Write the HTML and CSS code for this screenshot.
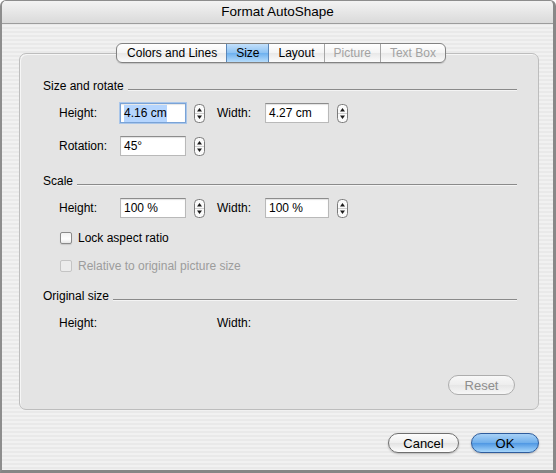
FILE: index.html
```html
<!DOCTYPE html>
<html lang="en">
  <head>
    <meta charset="UTF-8" />
    <title>Format AutoShape</title>
    <link rel="stylesheet" href="styles.css">
  </head>
  <body>
    <div class="window">
      <div class="titlebar">Format AutoShape</div>
      <div class="content">
        <div class="panel">
          <div class="tabs">
            <span class="tab">Colors and Lines</span>
            <span class="tab selected">Size</span>
            <span class="tab">Layout</span>
            <span class="tab disabled">Picture</span>
            <span class="tab disabled">Text Box</span>
          </div>

          <div class="group-title first"><span>Size and rotate</span><i></i></div>
          <div class="field-row">
            <label class="lbl">Height:</label>
            <span class="input focused"><span class="sel">4.16 cm</span></span>
            <svg class="spin" width="11" height="19" viewBox="0 0 11 19"><use href="#spin" /></svg>
            <label class="lbl second">Width:</label>
            <span class="input narrow">4.27 cm</span>
            <svg class="spin" width="11" height="19" viewBox="0 0 11 19"><use href="#spin" /></svg>
          </div>
          <div class="field-row gap-lg">
            <label class="lbl">Rotation:</label>
            <span class="input">45°</span>
            <svg class="spin" width="11" height="19" viewBox="0 0 11 19"><use href="#spin" /></svg>
          </div>

          <div class="group-title"><span>Scale</span><i></i></div>
          <div class="field-row">
            <label class="lbl">Height:</label>
            <span class="input">100 %</span>
            <svg class="spin" width="11" height="19" viewBox="0 0 11 19"><use href="#spin" /></svg>
            <label class="lbl second">Width:</label>
            <span class="input narrow">100 %</span>
            <svg class="spin" width="11" height="19" viewBox="0 0 11 19"><use href="#spin" /></svg>
          </div>
          <div class="check-row">
            <span class="checkbox"></span>
            <span>Lock aspect ratio</span>
          </div>
          <div class="check-row disabled tight">
            <span class="checkbox"></span>
            <span>Relative to original picture size</span>
          </div>

          <div class="group-title orig"><span>Original size</span><i></i></div>
          <div class="field-row">
            <label class="lbl wide">Height:</label>
            <label class="lbl">Width:</label>
          </div>

          <div class="panel-foot">
            <span class="btn off">Reset</span>
          </div>
        </div>

        <div class="dialog-buttons">
          <span class="btn cancel">Cancel</span>
          <span class="btn default">OK</span>
        </div>
      </div>
    </div>

    <svg width="0" height="0" style="position:absolute">
      <defs>
        <g id="spin">
          <rect x="0.5" y="0.5" width="10" height="18" rx="4" fill="#fafafa" stroke="#7b7b7b" />
          <line x1="1" y1="9.5" x2="10" y2="9.5" stroke="#d0d0d0" />
          <path d="M3 7.5 L5.5 4 L8 7.5 Z" fill="#1a1a1a" />
          <path d="M3 11.5 L5.5 15 L8 11.5 Z" fill="#1a1a1a" />
        </g>
      </defs>
    </svg>
  </body>
</html>
```

FILE: styles.css
```css
body {
  margin: 0;
  font-family: "Liberation Sans", Arial, sans-serif;
  font-size: 12px;
  color: #000;
  background: #fff;
}
.window {
  width: 556px;
  height: 473px;
  box-sizing: border-box;
  border: 1px solid #8d8d8d;
  border-left-width: 2px;
  border-right: 3px solid #888;
  border-bottom: 3px solid #858585;
  border-radius: 6px 6px 0 0;
  overflow: hidden;
  background: repeating-linear-gradient(#f1f1f1 0 2px, #e9e9e9 2px 4px);
}
.titlebar {
  height: 22px;
  line-height: 22px;
  text-align: center;
  font-size: 13.5px;
  background: linear-gradient(#f3f3f3, #dadada);
  border-bottom: 1px solid #9c9c9c;
}
.content {
  display: flex;
  flex-direction: column;
  padding-left: 17px;
}
.panel {
  margin-top: 29px;
  width: 520px;
  height: 357px;
  box-sizing: border-box;
  border: 1px solid #bdbdbd;
  border-radius: 7px;
  background: #e4e4e4;
  box-shadow: inset 1px 1px 0 #f6f6f6;
  display: flex;
  flex-direction: column;
  padding: 0 21px 14px 23px;
}
.tabs {
  display: flex;
  align-self: center;
  height: 20px;
  box-sizing: border-box;
  margin-top: -11px;
  margin-left: 2px;
  border: 1px solid #828282;
  border-radius: 6px;
  overflow: hidden;
  background: linear-gradient(#ffffff, #f4f4f4 50%, #e8e8e8 51%, #fbfbfb);
  box-shadow: 0 1px 1px rgba(0, 0, 0, 0.15);
}
.tab {
  padding: 0 9px;
  line-height: 18px;
  border-left: 1px solid #a6a6a6;
}
.tab:first-child {
  border-left: none;
  padding: 0 9px 0 10px;
}
.tab.selected {
  background: linear-gradient(#c3e0fb, #8cc2f3 50%, #6cb0ef 51%, #b6dcfb);
  border-left-color: #5a86b8;
  border-right: 1px solid #5a86b8;
  padding: 0 9px;
}
.tab.selected + .tab {
  border-left: none;
}
.tab.disabled {
  color: #a2a2a2;
}
.group-title {
  display: flex;
  align-items: center;
  height: 15px;
  line-height: 15px;
  margin-top: 18px;
}
.group-title.first {
  margin-top: 16px;
}
.group-title.orig {
  margin-top: 13px;
}
.group-title i {
  flex: 1;
  height: 1px;
  margin: 5px 0 0 4px;
  background: #8a8a8a;
  box-shadow: 0 1px 0 #f4f4f4;
}
.field-row {
  display: flex;
  align-items: center;
  height: 20px;
  margin-top: 9px;
  padding-left: 16px;
}
.field-row.gap-lg {
  margin-top: 13px;
}
.lbl {
  width: 61px;
}
.lbl.second {
  width: 48px;
  margin-left: 12px;
}
.lbl.wide {
  width: 158px;
}
.input {
  width: 66px;
  height: 20px;
  box-sizing: border-box;
  padding: 0 3px;
  line-height: 18px;
  background: #fff;
  border: 1px solid #b9b9b9;
  border-top-color: #8c8c8c;
  box-shadow: inset 0 1px 1px rgba(0, 0, 0, 0.12);
}
.input.narrow {
  width: 64px;
}
.input.focused {
  border-color: #7aa3d6;
  box-shadow: 0 0 0 1px #a9c6ea, inset 0 1px 1px rgba(0, 0, 0, 0.1);
}
.sel {
  background: #b5d5fe;
  padding: 1px 0 2px;
}
.spin {
  display: block;
  margin-left: 8px;
}
.check-row {
  display: flex;
  align-items: center;
  gap: 6px;
  height: 20px;
  margin-top: 10px;
  padding-left: 17px;
}
.check-row.tight {
  margin-top: 8px;
}
.checkbox {
  width: 12px;
  height: 12px;
  box-sizing: border-box;
  border: 1px solid #8a8a8a;
  border-radius: 2px;
  background: linear-gradient(#f2f2f2, #ffffff 60%, #e6e6e6);
  box-shadow: 0 1px 1px rgba(0, 0, 0, 0.12);
}
.check-row.disabled {
  color: #9c9c9c;
}
.check-row.disabled .checkbox {
  border-color: #c4c4c4;
  background: #ececec;
  box-shadow: none;
}
.panel-foot {
  margin-top: auto;
  display: flex;
  justify-content: flex-end;
  padding-right: 2px;
}
.btn {
  display: inline-flex;
  align-items: center;
  justify-content: center;
  height: 20px;
  box-sizing: border-box;
  border-radius: 10px;
  font-size: 13px;
  border: 1px solid #6f6f6f;
  background: linear-gradient(#fdfdfd, #eeeeee 50%, #e2e2e2 51%, #ffffff);
  box-shadow: 0 1px 2px rgba(0, 0, 0, 0.25);
}
.btn.off {
  width: 67px;
  color: #8e8e8e;
  border-color: #adadad;
  background: linear-gradient(#f8f8f8, #ededed 50%, #e6e6e6 51%, #f7f7f7);
  box-shadow: none;
}
.dialog-buttons {
  display: flex;
  justify-content: flex-end;
  gap: 12px;
  width: 520px;
  margin-top: 23px;
}
.btn.cancel {
  width: 71px;
}
.btn.default {
  width: 68px;
  border-color: #2e5c9c;
  background: linear-gradient(#a8d1f6, #6eaeeb 50%, #4e97e3 51%, #a6d6fb);
}
```
